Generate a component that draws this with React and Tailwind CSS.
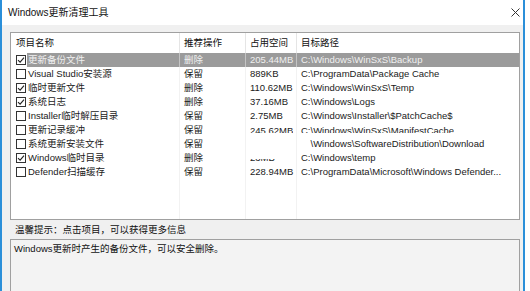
import React from "react"

const rows = [
  { on: true, name: "更新备份文件", act: "删除", size: "205.44MB", path: "C:\\Windows\\WinSxS\\Backup", sel: true },
  { on: false, name: "Visual Studio安装源", act: "保留", size: "889KB", path: "C:\\ProgramData\\Package Cache" },
  { on: true, name: "临时更新文件", act: "删除", size: "110.62MB", path: "C:\\Windows\\WinSxS\\Temp" },
  { on: true, name: "系统日志", act: "删除", size: "37.16MB", path: "C:\\Windows\\Logs" },
  { on: false, name: "Installer临时解压目录", act: "保留", size: "2.75MB", path: "C:\\Windows\\Installer\\$PatchCache$" },
  { on: false, name: "更新记录缓冲", act: "保留", size: "245.62MB", path: "C:\\Windows\\WinSxS\\ManifestCache", cutBottom: true },
  { on: false, name: "系统更新安装文件", act: "保留", size: "", path: "\\Windows\\SoftwareDistribution\\Download", hideDrive: true },
  { on: true, name: "Windows临时目录", act: "删除", size: "23MB", path: "C:\\Windows\\temp", cutTop: true },
  { on: false, name: "Defender扫描缓存", act: "保留", size: "228.94MB", path: "C:\\ProgramData\\Microsoft\\Windows Defender..." },
]

function CheckBox({ on }) {
  return (
    <div className="w-[10px] h-[10px] border border-[#333] bg-white flex items-center justify-center">
      {on && (
        <svg width="8" height="8" viewBox="0 0 8 8">
          <path d="M1 4.2 L3.1 6.2 L7 1.6" fill="none" stroke="#222" strokeWidth="1.1" />
        </svg>
      )}
    </div>
  )
}

function Row({ r }) {
  const cell = r.sel ? "border-r border-[#c4c4c4]" : "border-r border-[#f2f2f2]"
  return (
    <div className="flex h-[14px] items-center shrink-0">
      <div className="w-[16px] pl-[5px] flex items-center">
        <CheckBox on={r.on} />
      </div>
      <div className={`flex-1 h-full grid grid-cols-[153px_66px_51px_1fr] items-center ${r.sel ? "bg-[#9b9b9b] text-[#f0f0f0]" : "text-[#1a1a1a]"}`}>
        <div className={`h-full flex items-center pl-[1px] whitespace-nowrap ${cell}`}>{r.name}</div>
        <div className={`h-full flex items-center pl-[4px] ${cell}`}>{r.act}</div>
        <div className={`h-full flex pl-[4px] whitespace-nowrap overflow-hidden ${cell} ${r.cutTop ? "items-end" : "items-center"}`}>
          {r.cutBottom ? (
            <span className="h-[8px] overflow-hidden self-start mt-[2px] leading-[11px]">{r.size}</span>
          ) : r.cutTop ? (
            <span className="h-[4px] overflow-hidden flex items-end leading-[11px] mb-[2px]">{r.size}</span>
          ) : (
            r.size
          )}
        </div>
        <div className="h-full flex items-center pl-[4px] whitespace-nowrap overflow-hidden">
          {r.cutBottom ? (
            <span className="h-[8px] overflow-hidden self-start mt-[2px] leading-[11px]">{r.path}</span>
          ) : r.hideDrive ? (
            <span><span className="invisible">C:</span>{r.path}</span>
          ) : (
            r.path
          )}
        </div>
      </div>
    </div>
  )
}

export default function App() {
  return (
    <div
      className="w-[530px] h-[291px] bg-white flex overflow-hidden text-[9.5px] leading-none"
      style={{ fontFamily: '"Liberation Sans", "Noto Sans CJK SC", sans-serif' }}
    >
      <div className="w-[2px] bg-[#2b8fd9]" />
      <div className="flex-1 flex flex-col">
        {/* title bar */}
        <div className="h-[25px] bg-white flex items-center justify-between pl-[6px] pr-[3px]">
          <span className="text-[10px] text-[#111]">Windows更新清理工具</span>
          <svg width="9" height="9" viewBox="0 0 9 9">
            <path d="M0.5 0.5 L8.5 8.5 M8.5 0.5 L0.5 8.5" stroke="#333" strokeWidth="1" />
          </svg>
        </div>

        {/* body */}
        <div className="flex-1 bg-[#f0f0f0] pl-[8px] pr-[3px] pt-[7px] flex flex-col">
          {/* list */}
          <div className="h-[188px] border border-[#a0a0a0] bg-white flex flex-col">
            <div className="h-[20px] grid grid-cols-[169px_66px_51px_1fr] items-center text-[#111] shrink-0">
              <div className="h-full flex items-center pl-[5px] border-r border-[#e5e5e5]">项目名称</div>
              <div className="h-full flex items-center pl-[4px] border-r border-[#e5e5e5]">推荐操作</div>
              <div className="h-full flex items-center pl-[4px] border-r border-[#e5e5e5]">占用空间</div>
              <div className="h-full flex items-center pl-[4px]">目标路径</div>
            </div>
            {rows.map((r, i) => (
              <Row key={i} r={r} />
            ))}
            <div className="flex-1 grid grid-cols-[169px_66px_51px_1fr]">
              <div className="border-r border-[#f2f2f2]" />
              <div className="border-r border-[#f2f2f2]" />
              <div className="border-r border-[#f2f2f2]" />
              <div />
            </div>
          </div>

          {/* hint */}
          <div className="h-[19px] flex items-center pl-[5px] text-[#111] shrink-0">
            温馨提示：点击项目，可以获得更多信息
          </div>

          {/* detail box */}
          <div className="flex-1 border border-b-0 border-[#a0a0a0] bg-[#f3f3f3] pl-[3px] pt-[4px] text-[#111]">
            Windows更新时产生的备份文件，可以安全删除。
          </div>
        </div>
      </div>
      <div className="w-[2px] bg-[#2b8fd9]" />
      <div className="w-[5px] bg-white" />
    </div>
  )
}
